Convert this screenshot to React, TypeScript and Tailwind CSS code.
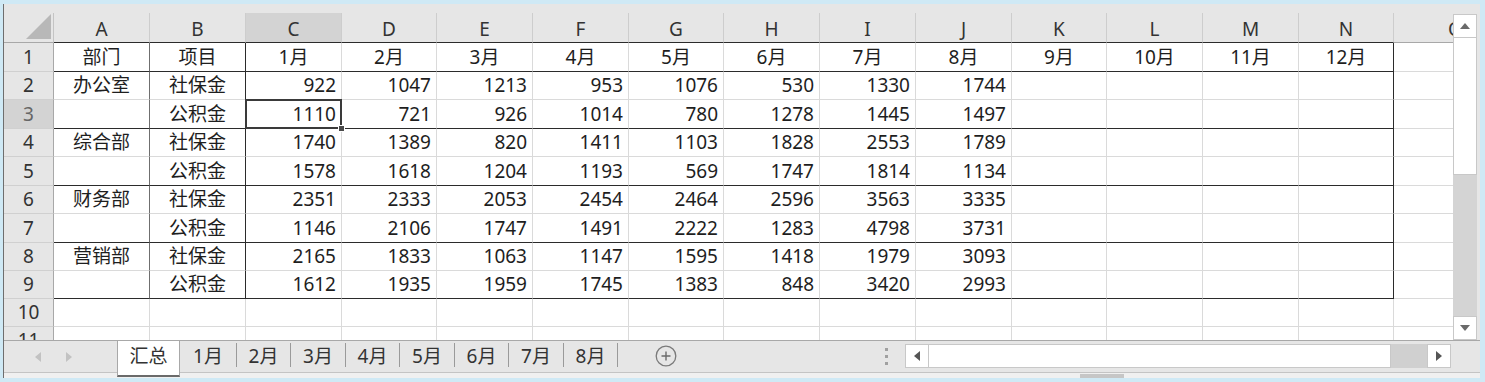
import React from 'react'

const COLS = [
  { l: 'A', w: 'w-[96px]' },
  { l: 'B', w: 'w-[96px]' },
  { l: 'C', w: 'w-[96px]' },
  { l: 'D', w: 'w-[95px]' },
  { l: 'E', w: 'w-[96px]' },
  { l: 'F', w: 'w-[96px]' },
  { l: 'G', w: 'w-[95px]' },
  { l: 'H', w: 'w-[96px]' },
  { l: 'I', w: 'w-[96px]' },
  { l: 'J', w: 'w-[96px]' },
  { l: 'K', w: 'w-[95px]' },
  { l: 'L', w: 'w-[96px]' },
  { l: 'M', w: 'w-[96px]' },
  { l: 'N', w: 'w-[95px]' },
  { l: 'O', w: 'w-[124px]' },
]

const HEIGHTS = ['h-[29px]', 'h-[28px]', 'h-[29px]', 'h-[28px]', 'h-[29px]', 'h-[28px]', 'h-[29px]', 'h-[28px]', 'h-[28px]', 'h-[28px]', 'h-[28px]']

const MONTHS = ['1月', '2月', '3月', '4月', '5月', '6月', '7月', '8月', '9月', '10月', '11月', '12月']

const DATA: (string | number)[][] = [
  ['部门', '项目', ...MONTHS],
  ['办公室', '社保金', 922, 1047, 1213, 953, 1076, 530, 1330, 1744],
  ['', '公积金', 1110, 721, 926, 1014, 780, 1278, 1445, 1497],
  ['综合部', '社保金', 1740, 1389, 820, 1411, 1103, 1828, 2553, 1789],
  ['', '公积金', 1578, 1618, 1204, 1193, 569, 1747, 1814, 1134],
  ['财务部', '社保金', 2351, 2333, 2053, 2454, 2464, 2596, 3563, 3335],
  ['', '公积金', 1146, 2106, 1747, 1491, 2222, 1283, 4798, 3731],
  ['营销部', '社保金', 2165, 1833, 1063, 1147, 1595, 1418, 1979, 3093],
  ['', '公积金', 1612, 1935, 1959, 1745, 1383, 848, 3420, 2993],
  [],
  [],
]

const TABS = [
  { t: '1月', w: 'w-[56px]' },
  { t: '2月', w: 'w-[53px]' },
  { t: '3月', w: 'w-[54px]' },
  { t: '4月', w: 'w-[53px]' },
  { t: '5月', w: 'w-[54px]' },
  { t: '6月', w: 'w-[53px]' },
  { t: '7月', w: 'w-[54px]' },
  { t: '8月', w: 'w-[53px]' },
]

function Cell({ r, c, value }: { r: number; c: number; value: string | number | undefined }) {
  const inTable = r <= 9 && c <= 13
  let right = 'border-r-[#dadada]'
  if (inTable && (c === 1 || c === 13)) right = 'border-r-[#2b2b2b]'
  else if (inTable && c === 0) right = 'border-r-[#6f6f6f]'
  const bottom = inTable && r % 2 === 1 ? 'border-b-[#2b2b2b]' : 'border-b-[#dadada]'
  const align = r === 1 || c <= 1 ? 'justify-center' : 'justify-end pr-[5px]'
  const selected = r === 3 && c === 2
  return (
    <div className={`${COLS[c].w} ${HEIGHTS[r - 1]} relative flex shrink-0 items-center border-r border-b ${right} ${bottom} ${align}`}>
      {value}
      {selected && (
        <>
          <div className="absolute -top-[1px] -left-[1px] -right-[1px] -bottom-[1px] border-2 border-[#3a3a3a]" />
          <div className="absolute -right-[4px] -bottom-[4px] z-10 h-[7px] w-[7px] border border-white bg-[#4a4a4a]" />
        </>
      )}
    </div>
  )
}

export default function App() {
  return (
    <div className="h-[382px] w-[1485px] overflow-hidden bg-[#cfe9f5] pt-[4px] pl-[3px] font-['Noto_Sans','Noto_Sans_CJK_SC',sans-serif] text-[19px] text-[#1e1e1e]">
      <div className="flex h-[374px] w-[1477px] flex-col border-l border-[#6e6e6e] bg-[#e6e6e6]">
        <div className="flex h-[336px]">
          {/* sheet */}
          <div className="flex h-[336px] w-[1449px] flex-col overflow-hidden bg-white">
            <div className="flex h-[39px] shrink-0 bg-[#e6e6e6] pt-[9px] text-[#333]">
              <div className="flex h-[30px] w-[50px] shrink-0 items-end justify-end border-r border-b border-r-[#c4c4c4] border-b-[#a8a8a8] pr-[2px] pb-[3px]">
                <svg width="25" height="25" viewBox="0 0 25 25">
                  <polygon points="25,0 25,25 0,25" fill="#b8b8b8" />
                </svg>
              </div>
              {COLS.map((col, i) => (
                <div
                  key={col.l}
                  className={`${col.w} flex h-[30px] shrink-0 items-center justify-center border-r border-b border-r-[#cdcdcd] pt-[3px] ${i <= 13 ? 'border-b-[#2b2b2b]' : 'border-b-[#a8a8a8]'} ${i === 2 ? 'bg-[#d3d3d3]' : ''}`}
                >
                  {col.l}
                </div>
              ))}
            </div>
            {DATA.map((row, ri) => {
              const r = ri + 1
              return (
                <div key={r} className="flex shrink-0">
                  <div
                    className={`flex w-[50px] shrink-0 items-center justify-center border-r border-b border-r-[#a8a8a8] border-b-[#d0d0d0] ${HEIGHTS[ri]} ${r === 3 ? 'bg-[#d3d3d3] text-[#666]' : 'bg-[#e6e6e6] text-[#333]'}`}
                  >
                    {r}
                  </div>
                  {COLS.map((col, c) => (
                    <Cell key={col.l} r={r} c={c} value={row[c]} />
                  ))}
                </div>
              )
            })}
          </div>
          {/* vertical scrollbar */}
          <div className="flex w-[24px] flex-col pt-[10px]">
            <div className="flex h-[24px] items-center justify-center border border-[#c8c8c8] bg-white">
              <svg width="10" height="6" viewBox="0 0 10 6">
                <polygon points="5,0 10,6 0,6" fill="#6a6a6a" />
              </svg>
            </div>
            <div className="h-[137px] border-x border-b border-[#c8c8c8] bg-white" />
            <div className="flex-1 bg-[#d4d4d4]" />
            <div className="flex h-[24px] items-center justify-center border border-[#c8c8c8] bg-white">
              <svg width="10" height="6" viewBox="0 0 10 6">
                <polygon points="0,0 10,0 5,6" fill="#6a6a6a" />
              </svg>
            </div>
          </div>
          <div className="w-[3px]" />
        </div>

        {/* sheet tabs */}
        <div className="flex h-[32px] items-start border-t border-[#a8a8a8] text-[#333]">
          <div className="flex h-[31px] w-[113px] shrink-0 items-center pl-[31px]">
            <svg width="6" height="10" viewBox="0 0 6 10">
              <polygon points="6,0 6,10 0,5" fill="#c2c2c2" />
            </svg>
            <svg className="ml-[25px]" width="6" height="10" viewBox="0 0 6 10">
              <polygon points="0,0 6,5 0,10" fill="#c2c2c2" />
            </svg>
          </div>
          <div className="relative z-10 flex h-[36px] w-[63px] shrink-0 flex-col border-x border-b-2 border-x-[#a8a8a8] border-b-[#6a6a6a] bg-white">
            <div className="flex h-[31px] items-center justify-center">汇总</div>
          </div>
          {TABS.map(tab => (
            <React.Fragment key={tab.t}>
              <div className={`${tab.w} flex h-[31px] shrink-0 items-center justify-center`}>{tab.t}</div>
              <div className="mt-[2px] h-[24px] w-px shrink-0 bg-[#9a9a9a]" />
            </React.Fragment>
          ))}
          <svg className="mt-[4px] ml-[37px] shrink-0" width="22" height="22" viewBox="0 0 22 22">
            <circle cx="11" cy="11" r="9.8" fill="none" stroke="#7a7a7a" strokeWidth="1.3" />
            <path d="M11 6.5v9M6.5 11h9" stroke="#6a6a6a" strokeWidth="1.4" />
          </svg>
          <div className="mt-[7px] ml-[208px] flex shrink-0 flex-col gap-[4px]">
            <div className="h-[3px] w-[3px] bg-[#a0a0a0]" />
            <div className="h-[3px] w-[3px] bg-[#a0a0a0]" />
            <div className="h-[3px] w-[3px] bg-[#a0a0a0]" />
          </div>
          <div className="mt-[3px] ml-[17px] flex h-[24px] shrink-0">
            <div className="flex w-[24px] items-center justify-center border border-[#c8c8c8] bg-white">
              <svg width="6" height="10" viewBox="0 0 6 10">
                <polygon points="6,0 6,10 0,5" fill="#555" />
              </svg>
            </div>
            <div className="w-[462px] border-y border-r border-[#c8c8c8] bg-white" />
            <div className="w-[36px] bg-[#d0d0d0]" />
            <div className="flex w-[24px] items-center justify-center border border-[#c8c8c8] bg-white">
              <svg width="6" height="10" viewBox="0 0 6 10">
                <polygon points="0,0 6,5 0,10" fill="#555" />
              </svg>
            </div>
          </div>
        </div>
        <div className="flex h-[6px] items-end border-t border-[#c4c4c4] bg-[#f0f0f0] pl-[1076px]">
          <div className="h-[4px] w-[44px] bg-[#c6c6c6]" />
        </div>
      </div>
    </div>
  )
}
